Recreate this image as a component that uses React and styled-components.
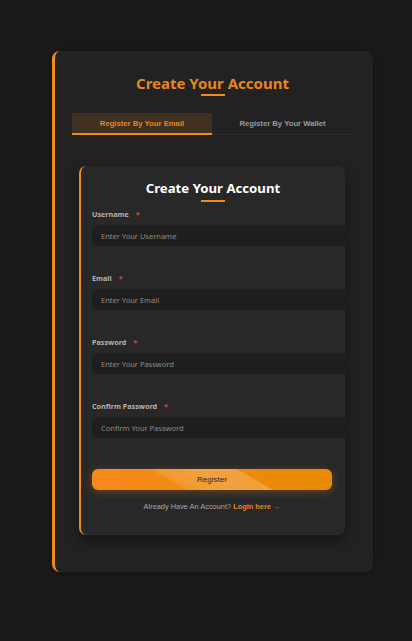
import styled, { createGlobalStyle } from 'styled-components';

const Global = createGlobalStyle`
  html, body { margin: 0; padding: 0; background: #1a1a1a; }
  body { font-family: "Open Sans", "Noto Sans", sans-serif; }
  * { box-sizing: border-box; }
`;

const Page = styled.div`
  min-height: 641px;
  padding: 51px 39px 69px 52px;
  background: #1a1a1a;
`;

const Shell = styled.div`
  width: 321px;
  min-height: 521px;
  background: #222222;
  border-radius: 8px;
  border-left: 3px solid #f28b1c;
  padding: 22px 20px 37px 17px;
  box-shadow: 0 0 8px rgba(0, 0, 0, 0.35);
`;

const Title = styled.h1`
  margin: 0;
  text-align: center;
  font-family: "Noto Sans", "Open Sans", sans-serif;
  font-weight: 700;
  font-size: ${p => (p.$small ? '13.2px' : '15px')};
  line-height: 20px;
  color: ${p => (p.$small ? '#ffffff' : '#e8861c')};
  &::after {
    content: '';
    display: block;
    width: 24px;
    height: 2px;
    margin: ${p => (p.$small ? '2px' : '1px')} auto 0;
    background: #f28b1c;
  }
`;

const Tabs = styled.div`
  display: grid;
  grid-template-columns: 140px 1fr;
  margin-top: 17px;
  border-bottom: 1px solid #2c2c2c;
`;

const Tab = styled.div`
  height: 22px;
  display: flex;
  align-items: center;
  justify-content: center;
  font-family: "Liberation Sans", Arial, sans-serif;
  font-weight: 700;
  font-size: 7.7px;
  color: ${p => (p.$active ? '#e8861c' : '#9a9a9a')};
  background: ${p => (p.$active ? '#3f3021' : 'transparent')};
  border-bottom: 2px solid ${p => (p.$active ? '#f28b1c' : 'transparent')};
  margin-bottom: -1px;
`;

const Card = styled.div`
  margin: 31px 8px 0 7px;
  background: #282828;
  border-left: 2px solid #f28b1c;
  border-radius: 7px;
  overflow: hidden;
  padding: 12px 0 24px 0;
  box-shadow: 0 6px 14px rgba(0, 0, 0, 0.4);
`;

const Form = styled.form`
  padding-left: 11px;
  margin: 0;
`;

const Field = styled.div`
  margin-top: ${p => (p.$first ? '7px' : '27px')};
`;

const Label = styled.label`
  display: block;
  font-family: "Noto Sans", "Open Sans", sans-serif;
  font-weight: 700;
  font-size: 7.2px;
  line-height: 10px;
  color: #b4b4b4;
  margin-bottom: 6px;
  &::after {
    content: '*';
    color: #e0403a;
    margin-left: 7px;
  }
`;

const Input = styled.input`
  display: block;
  width: calc(100% + 10px);
  height: 21px;
  background: #1f1f1f;
  border: none;
  border-radius: 4px;
  padding: 0 9px;
  font-family: "Noto Sans", "Open Sans", sans-serif;
  font-size: 7.5px;
  color: #ddd;
  outline: none;
  &::placeholder { color: #8a8a8a; }
`;

const Button = styled.button`
  display: block;
  width: 240px;
  height: 21px;
  margin-top: 31px;
  border: none;
  border-radius: 6px;
  font-family: "Liberation Sans", Arial, sans-serif;
  font-size: 8px;
  color: #2a2a2a;
  background:
    linear-gradient(30deg, transparent 0 33%, rgba(255,255,255,0.12) 36%, rgba(255,255,255,0.2) 50%, rgba(255,255,255,0.2) 65%, transparent 66%),
    linear-gradient(90deg, #f58a1c, #e98a00);
  box-shadow: 0 2px 8px rgba(242, 139, 28, 0.3);
`;

const Footer = styled.p`
  margin: 12px 0 0;
  width: 240px;
  text-align: center;
  font-family: "Liberation Sans", Arial, sans-serif;
  font-size: 7.4px;
  color: #a9a9a9;
  > a {
    color: #e8861c;
    font-weight: 700;
    text-decoration: none;
  }
`;

const fields = [
  ['Username', 'Enter Your Username', 'text'],
  ['Email', 'Enter Your Email', 'email'],
  ['Password', 'Enter Your Password', 'password'],
  ['Confirm Password', 'Confirm Your Password', 'password'],
];

export default function App() {
  return (
    <>
      <Global />
      <Page>
        <Shell>
          <Title>Create Your Account</Title>
          <Tabs>
            <Tab $active>Register By Your Email</Tab>
            <Tab>Register By Your Wallet</Tab>
          </Tabs>
          <Card>
            <Title $small>Create Your Account</Title>
            <Form onSubmit={e => e.preventDefault()}>
              {fields.map(([label, ph, type], i) => (
                <Field key={label} $first={i === 0}>
                  <Label>{label}</Label>
                  <Input type={type} placeholder={ph} />
                </Field>
              ))}
              <Button type="submit">Register</Button>
              <Footer>
                Already Have An Account? <a href="#">Login here →</a>
              </Footer>
            </Form>
          </Card>
        </Shell>
      </Page>
    </>
  );
}
